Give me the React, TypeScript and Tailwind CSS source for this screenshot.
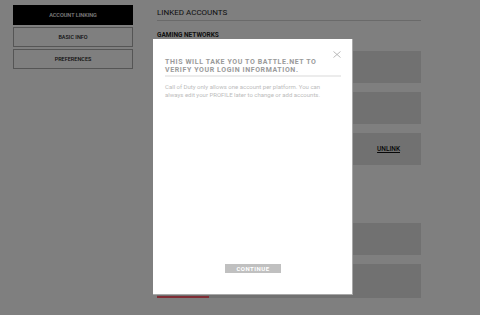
import React from "react";

const navItems = ["ACCOUNT LINKING", "BASIC INFO", "PREFERENCES"];

function SideNav({ active }: { active: string }) {
  return (
    <nav className="flex flex-col gap-[2px] pl-[13px] pt-[5px] w-[133px] shrink-0">
      {navItems.map((label) => (
        <button
          key={label}
          className={
            label === active
              ? "h-[20px] w-[120px] bg-black text-white text-[5.5px] leading-[6px] font-medium border border-black"
              : "h-[20px] w-[120px] bg-white text-[#222] text-[5.5px] leading-[6px] font-medium border border-[#aaaaaa]"
          }
        >
          {label}
        </button>
      ))}
    </nav>
  );
}

function AccountCard({
  action,
  accent,
}: {
  action?: string;
  accent?: boolean;
}) {
  return (
    <div className={accent ? "h-[34px] bg-[#e2e2e2] flex flex-col" : "h-[32px] bg-[#e2e2e2] flex flex-col"}>
      <div className="flex-1 flex items-center justify-end pr-[21px]">
        {action && (
          <span className="text-[6.5px] leading-[7px] text-[#111] underline font-medium">
            {action}
          </span>
        )}
      </div>
      {accent && <span className="h-[2px] w-[52px] bg-[#ff5a6a]"></span>}
    </div>
  );
}

function LinkedAccounts() {
  return (
    <main className="ml-[24px] w-[264px] flex flex-col">
      <h1 className="mt-[9px] pb-[3px] border-b border-[#d4d4d4] text-[8px] leading-[8px] text-[#222]">
        LINKED ACCOUNTS
      </h1>
      <h2 className="mt-[11px] text-[6.5px] leading-[7px] font-bold text-[#222]">
        GAMING NETWORKS
      </h2>
      <div className="mt-[12px] flex flex-col gap-[9px]">
        <AccountCard />
        <AccountCard />
        <AccountCard action="UNLINK" />
      </div>
      <div className="mt-[58px] flex flex-col gap-[9px]">
        <AccountCard />
        <AccountCard accent />
      </div>
    </main>
  );
}

function LinkModal() {
  return (
    <div className="absolute left-[153px] top-[39px] w-[200px] h-[256px] bg-white border-r border-b border-[#a8a8a8] flex flex-col pl-[12px] pr-[11px]">
      <div className="flex justify-end pt-[12px] h-[19px]">
        <svg width="8" height="7" viewBox="0 0 8 7" className="block">
          <path d="M0.5 0.5 L7.5 6.5 M7.5 0.5 L0.5 6.5" stroke="#a9a9a9" strokeWidth="0.8" fill="none" />
        </svg>
      </div>
      <h3 className="text-[7px] leading-[8px] font-bold tracking-[0.6px] text-[#9a9a9a] pb-[1px] border-b-2 border-[#ececec]">
        THIS WILL TAKE YOU TO BATTLE.NET TO
        <br />
        VERIFY YOUR LOGIN INFORMATION.
      </h3>
      <p className="mt-[6px] text-[6px] leading-[8px] text-[#bcbcbc]">
        Call of Duty only allows one account per platform. You can
        <br />
        always edit your PROFILE later to change or add accounts.
      </p>
      <button className="mt-auto mb-[21px] self-center w-[56px] h-[9px] bg-[#c0c0c0] text-white text-[6px] leading-[9px] font-bold tracking-[0.5px]">
        CONTINUE
      </button>
    </div>
  );
}

export default function App() {
  return (
    <div
      className="relative w-[480px] h-[315px] overflow-hidden bg-white"
      style={{ fontFamily: "Roboto, 'Liberation Sans', sans-serif" }}
    >
      <div className="flex">
        <SideNav active="ACCOUNT LINKING" />
        <LinkedAccounts />
      </div>
      <div className="absolute inset-0 bg-black/50"></div>
      <LinkModal />
    </div>
  );
}
